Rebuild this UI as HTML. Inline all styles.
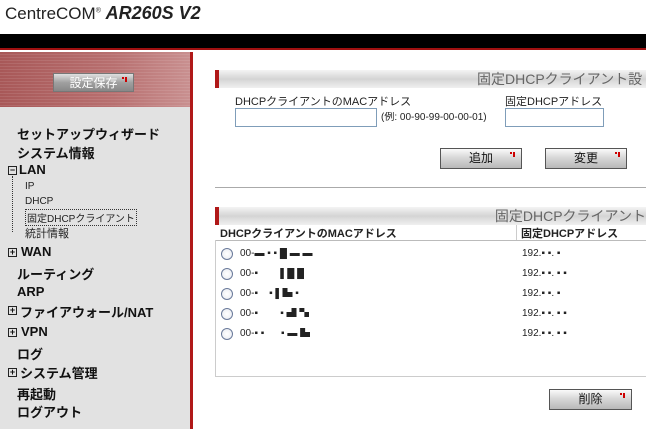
<!DOCTYPE html>
<html><head><meta charset="utf-8"><style>
*{margin:0;padding:0;box-sizing:border-box}
body{width:646px;height:429px;overflow:hidden;position:relative;background:#fff;font-family:"Liberation Sans","Noto Sans CJK JP",sans-serif;color:#111}
.a{position:absolute;white-space:nowrap}
.btn{position:absolute;border:1px solid #555;background:linear-gradient(#fafafa,#d8d8d8 45%,#b8b8b8);font-size:12px;text-align:center;line-height:19px;color:#111}
.btn:after{content:"";position:absolute;right:6px;top:3px;width:5px;height:5px;background:
linear-gradient(90deg,#c00 2px,transparent 2px) 0 0/5px 2px no-repeat,
linear-gradient(90deg,transparent 3px,#c00 3px) 0 0/5px 5px no-repeat}
.hdr{position:absolute;left:215px;width:431px;height:18px;background:linear-gradient(#f4f4f4,#d4d4d4 50%,#f0f0f0);border-left:4px solid #b01818;font-size:14px;color:#666;text-align:right;line-height:18px;overflow:hidden}
.m{position:absolute;left:17px;font-size:13px;font-weight:bold;color:#111}
.s{position:absolute;left:25px;font-size:10px;color:#222}
.pl{position:absolute;left:8px;width:9px;height:9px;border:1px solid #222;font-size:9px;line-height:7px;text-align:center;font-weight:bold}
.r{position:absolute;left:221px;width:12px;height:12px;border:1px solid #6a7a9a;border-radius:50%;background:radial-gradient(#fff,#e6e9f0)}
.t{position:absolute;font-size:10px;color:#222;line-height:12px;height:12px;overflow:hidden}
</style></head><body>
<div class="a" style="left:5px;top:3px;font-size:17px;color:#222">CentreCOM<sup style="font-size:7px">®</sup> <i style="font-weight:bold;font-size:18px">AR260S V2</i></div>
<div class="a" style="left:0;top:34px;width:646px;height:16px;background:#000;border-bottom:2px solid #a01010"></div>
<div class="a" style="left:0;top:52px;width:190px;height:377px;background:#e2e2e2"></div>
<div class="a" style="left:0;top:52px;width:190px;height:55px;background:repeating-linear-gradient(#0000 0 2px,#ffffff18 2px 3px),linear-gradient(90deg,#a85858,#b87070 60%,#c99090)"></div>
<div class="a" style="left:190px;top:52px;width:3px;height:377px;background:#b01818"></div>
<div class="btn" style="left:53px;top:73px;width:81px;height:19px;color:#fff;background:linear-gradient(#e0e0e0,#a0a0a0 50%,#888);border-color:#777">設定保存</div>
<div class="m" style="top:124px">セットアップウィザード</div>
<div class="m" style="top:143px">システム情報</div>
<div class="pl" style="top:166px">−</div><div class="m" style="top:162px;left:19px">LAN</div>
<div class="a" style="left:12px;top:176px;height:56px;border-left:1px dotted #333"></div>
<div class="s" style="top:181px">IP</div>
<div class="s" style="top:196px">DHCP</div>
<div class="s" style="top:209px;border:1px dotted #333;padding:0 1px">固定DHCPクライアント</div>
<div class="s" style="top:225px;font-size:11px">統計情報</div>
<div class="pl" style="top:248px">+</div><div class="m" style="top:244px;left:21px">WAN</div>
<div class="m" style="top:264px">ルーティング</div>
<div class="m" style="top:284px">ARP</div>
<div class="pl" style="top:306px">+</div><div class="m" style="top:302px;left:20px">ファイアウォール/NAT</div>
<div class="pl" style="top:328px">+</div><div class="m" style="top:324px;left:21px">VPN</div>
<div class="m" style="top:344px">ログ</div>
<div class="pl" style="top:368px">+</div><div class="m" style="top:363px;left:20px">システム管理</div>
<div class="m" style="top:384px">再起動</div>
<div class="m" style="top:402px">ログアウト</div>

<div class="hdr" style="top:70px;padding-right:0">固定DHCPクライアント設&nbsp;</div>
<div class="t" style="left:235px;top:95px;font-size:11px;height:14px;line-height:14px">DHCPクライアントのMACアドレス</div>
<div class="t" style="left:505px;top:95px;font-size:11px;height:14px;line-height:14px">固定DHCPアドレス</div>
<div class="a" style="left:235px;top:108px;width:142px;height:19px;border:1px solid #7f9db9"></div>
<div class="t" style="left:381px;top:112px">(例: 00-90-99-00-00-01)</div>
<div class="a" style="left:505px;top:108px;width:99px;height:19px;border:1px solid #7f9db9"></div>
<div class="btn" style="left:440px;top:148px;width:82px;height:21px">追加</div>
<div class="btn" style="left:545px;top:148px;width:82px;height:21px">変更</div>
<div class="a" style="left:215px;top:187px;width:431px;height:1px;background:#aaa"></div>
<div class="hdr" style="top:207px">固定DHCPクライアント</div>
<div class="a" style="left:215px;top:240px;width:431px;height:137px;border:1px solid #ccc;border-right:none"></div>
<div class="t" style="left:220px;top:227px;font-weight:bold;font-size:11px;height:14px;line-height:14px">DHCPクライアントのMACアドレス</div>
<div class="a" style="left:516px;top:225px;width:1px;height:16px;background:#ccc"></div>
<div class="t" style="left:521px;top:227px;font-weight:bold;font-size:11px;height:14px;line-height:14px">固定DHCPアドレス</div>
<div class="a" style="left:216px;top:240px;width:430px;height:1px;background:#bbb"></div>
<div class="r" style="top:248px"></div><div class="t" style="left:240px;top:248px">00-▬ ▪ ▪ █ ▬ ▬</div><div class="t" style="left:522px;top:248px">192.▪ ▪. ▪</div>
<div class="r" style="top:268px"></div><div class="t" style="left:240px;top:268px">00-▪&nbsp;&nbsp;&nbsp;&nbsp;&nbsp;&nbsp;&nbsp; ▌█ █</div><div class="t" style="left:522px;top:268px">192.▪ ▪. ▪ ▪</div>
<div class="r" style="top:288px"></div><div class="t" style="left:240px;top:288px">00-▪&nbsp;&nbsp;&nbsp; ▪ ▌▙ ▪</div><div class="t" style="left:522px;top:288px">192.▪ ▪. ▪</div>
<div class="r" style="top:308px"></div><div class="t" style="left:240px;top:308px">00-▪&nbsp;&nbsp;&nbsp;&nbsp;&nbsp;&nbsp;&nbsp; ▪ ▟ ▚</div><div class="t" style="left:522px;top:308px">192.▪ ▪. ▪ ▪</div>
<div class="r" style="top:328px"></div><div class="t" style="left:240px;top:328px">00-▪ ▪&nbsp;&nbsp;&nbsp;&nbsp;&nbsp; ▪ ▬ ▙</div><div class="t" style="left:522px;top:328px">192.▪ ▪. ▪ ▪</div>
<div class="btn" style="left:549px;top:389px;width:83px;height:21px">削除</div>
</body></html>
